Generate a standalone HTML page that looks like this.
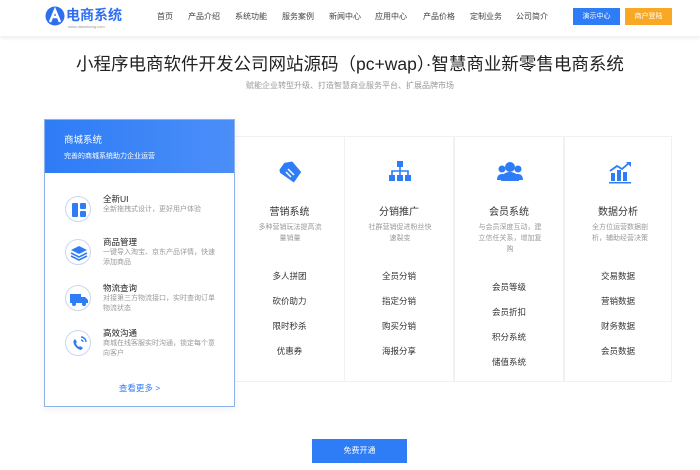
<!DOCTYPE html>
<html><head><meta charset="utf-8"><style>
*{margin:0;padding:0;box-sizing:border-box}
body{width:700px;height:470px;overflow:hidden;background:#fff;font-family:"Liberation Sans","Noto Sans CJK SC",sans-serif;position:relative;color:#333}
.hd{position:absolute;left:0;top:0;width:700px;height:36px;background:#fff;box-shadow:0 2px 4px rgba(0,0,0,.08)}
.a{position:absolute}
.nav span{position:absolute;top:11px;font-size:8px;color:#444;transform:translateX(-50%);white-space:nowrap}
.btn{position:absolute;top:8px;height:17px;width:47px;color:#fff;font-size:7px;text-align:center;line-height:17px}
.col{position:absolute;top:136px;width:110px;height:246px;border:1px solid #f0f1f4;text-align:center}
.col .t{position:absolute;top:66px;width:100%;font-size:10px;color:#333}
.col .d{position:absolute;top:85px;left:22px;width:66px;font-size:7px;line-height:11px;color:#999}
.col .it{position:absolute;width:100%;font-size:8.5px;color:#333}
.col svg{position:absolute;left:42px;top:22px}
.li{position:absolute;left:20px}
.li .c{position:absolute;left:0;top:0;width:26px;height:26px;border-radius:50%;border:1px solid #c8d6f5}
.li .h{position:absolute;left:38px;top:-3px;font-size:8.5px;color:#222;white-space:nowrap}
.li .p{position:absolute;left:38px;top:9px;width:115px;font-size:7px;line-height:10px;color:#999}
</style></head><body>
<div class="hd">
 <svg class="a" style="left:45px;top:6px" width="20" height="20" viewBox="0 0 20 20"><circle cx="10" cy="10" r="9.5" fill="#2e6ff0"/><path d="M5 16 L10 4 L15 16 M7.5 11 H12.5" stroke="#fff" stroke-width="2.4" fill="none"/></svg>
 <div class="a" style="left:66px;top:5px;font-size:14px;font-weight:bold;color:#2e6ff0">电商系统</div>
 <div class="a" style="left:68px;top:24px;font-size:4px;color:#999">www.dianshang.com</div>
 <div class="nav"><span style="left:165px">首页</span><span style="left:204px">产品介绍</span><span style="left:251px">系统功能</span><span style="left:298px">服务案例</span><span style="left:345px">新闻中心</span><span style="left:391px">应用中心</span><span style="left:439px">产品价格</span><span style="left:486px">定制业务</span><span style="left:532px">公司简介</span></div>
 <div class="btn" style="left:573px;background:#2e7cf6">演示中心</div>
 <div class="btn" style="left:625px;background:#f9a825">商户登陆</div>
</div>
<div class="a" style="left:0;width:700px;top:51px;text-align:center;font-size:17.5px;color:#222;white-space:nowrap">小程序电商软件开发公司网站源码（pc+wap）·智慧商业新零售电商系统</div>
<div class="a" style="left:0;width:700px;top:80px;text-align:center;font-size:8px;color:#999">赋能企业转型升级、打造智慧商业服务平台、扩展品牌市场</div>

<div class="col" style="left:235px;width:110px;border-left:none"><svg width="26" height="26" viewBox="0 0 26 26"><path d="M3 9 L9 3 L17 3 L24 15 L15 24 L3 12Z" fill="#2e7cf6" transform="rotate(-10 13 13)"/><path d="M11 10 L17 16 M9 13 L14 18" stroke="#fff" stroke-width="1.5"/></svg><div class="t">营销系统</div><div class="d">多种营销玩法提高流量销量</div><div class="it" style="top:133px">多人拼团</div><div class="it" style="top:158px">砍价助力</div><div class="it" style="top:183px">限时秒杀</div><div class="it" style="top:208px">优惠券</div></div>
<div class="col" style="left:344px"><svg width="26" height="26" viewBox="0 0 26 26" fill="#2e7cf6"><rect x="10" y="2" width="6" height="6"/><rect x="2" y="16" width="6" height="6"/><rect x="10" y="16" width="6" height="6"/><rect x="18" y="16" width="6" height="6"/><path d="M13 8v8M5 16v-4h16v4" stroke="#2e7cf6" stroke-width="1.6" fill="none"/></svg><div class="t">分销推广</div><div class="d">社群营销促进粉丝快速裂变</div><div class="it" style="top:133px">全员分销</div><div class="it" style="top:158px">指定分销</div><div class="it" style="top:183px">购买分销</div><div class="it" style="top:208px">海报分享</div></div>
<div class="col" style="left:454px"><svg width="26" height="26" viewBox="0 0 26 26" fill="#2e7cf6"><circle cx="13" cy="8" r="5"/><path d="M4 22c0-6 4-9 9-9s9 3 9 9z"/><circle cx="5" cy="10" r="3.5"/><circle cx="21" cy="10" r="3.5"/><path d="M0 21c0-4 2-6 5-6s3 1 3 1L6 21zM26 21c0-4-2-6-5-6s-3 1-3 1l2 5z"/></svg><div class="t">会员系统</div><div class="d">与会员深度互动，建立信任关系，增加复购</div><div class="it" style="top:144px">会员等级</div><div class="it" style="top:169px">会员折扣</div><div class="it" style="top:194px">积分系统</div><div class="it" style="top:219px">储值系统</div></div>
<div class="col" style="left:564px;width:108px"><svg width="26" height="26" viewBox="0 0 26 26" fill="#2e7cf6"><rect x="4" y="14" width="4" height="8"/><rect x="10" y="11" width="4" height="11"/><rect x="16" y="13" width="4" height="9"/><path d="M3 12 L10 7 L15 10 L22 4" stroke="#2e7cf6" stroke-width="1.8" fill="none"/><path d="M19 3h5v5z"/><rect x="2" y="23" width="22" height="1.5"/></svg><div class="t">数据分析</div><div class="d">全方位运营数据剖析，辅助经营决策</div><div class="it" style="top:133px">交易数据</div><div class="it" style="top:158px">营销数据</div><div class="it" style="top:183px">财务数据</div><div class="it" style="top:208px">会员数据</div></div>

<div class="a" style="left:44px;top:119px;width:191px;height:288px;border:1px solid #8fb2ee;background:#fff;box-shadow:0 2px 8px rgba(0,0,0,.06)">
 <div class="a" style="left:0;top:0;width:189px;height:53px;background:linear-gradient(90deg,#2e7cf6,#4b8ef8)"></div>
 <div class="a" style="left:19px;top:12px;font-size:9.5px;color:#fff">商城系统</div>
 <div class="a" style="left:19px;top:31px;font-size:7px;color:#fff">完善的商城系统助力企业运营</div>
 <div class="li" style="top:76px"><div class="c"><svg width="26" height="26" viewBox="0 0 26 26" fill="#2e7cf6"><rect x="6" y="6" width="6" height="14" rx="1"/><rect x="14" y="6" width="6" height="6" rx="1"/><rect x="14" y="14" width="6" height="6" rx="1"/></svg></div><div class="h">全新UI</div><div class="p">全新拖拽式设计，更好用户体验</div></div>
 <div class="li" style="top:119px"><div class="c"><svg width="26" height="26" viewBox="0 0 26 26" fill="#2e7cf6"><path d="M13 6l8 4-8 4-8-4z"/><path d="M5 13l8 4 8-4M5 16l8 4 8-4" stroke="#2e7cf6" stroke-width="1.6" fill="none"/></svg></div><div class="h">商品管理</div><div class="p">一键导入淘宝、京东产品详情，快速添加商品</div></div>
 <div class="li" style="top:165px"><div class="c"><svg width="26" height="26" viewBox="0 0 26 26" fill="#2e7cf6"><rect x="4" y="8" width="11" height="9"/><path d="M15 11h4l3 3v3h-7z"/><circle cx="8" cy="18" r="2"/><circle cx="18" cy="18" r="2"/></svg></div><div class="h">物流查询</div><div class="p">对接第三方物流接口，实时查询订单物流状态</div></div>
 <div class="li" style="top:210px"><div class="c"><svg width="26" height="26" viewBox="0 0 26 26"><path d="M8 9c-2 3 2 9 7 10l2-2-3-2-1 1c-2-1-3-3-3-4l1-1-2-3z" fill="#2e7cf6"/><path d="M15 6a5 5 0 0 1 5 5M15 9a2 2 0 0 1 2 2" stroke="#2e7cf6" stroke-width="1.4" fill="none"/></svg></div><div class="h">高效沟通</div><div class="p">商城在线客服实时沟通，锁定每个意向客户</div></div>
 <div class="a" style="left:0;width:189px;top:262px;text-align:center;font-size:8.5px;color:#2e7cf6">查看更多 &gt;</div>
</div>

<div class="a" style="left:312px;top:439px;width:95px;height:24px;background:#2e7cf6;color:#fff;font-size:8px;text-align:center;line-height:24px">免费开通</div>
</body></html>
